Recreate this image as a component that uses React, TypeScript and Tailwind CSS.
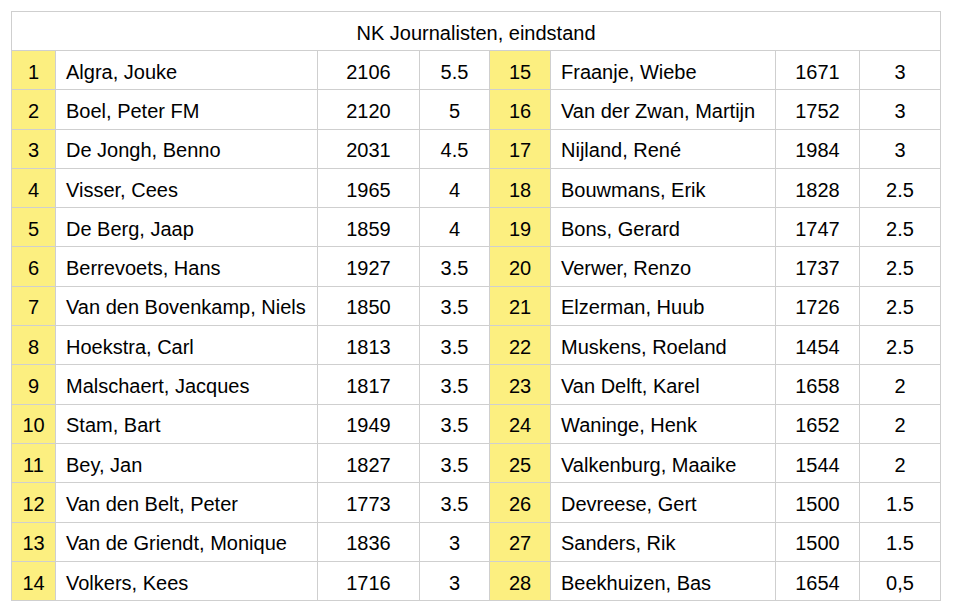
const rows: [number, string, string, string][] = [
  [1, 'Algra, Jouke', '2106', '5.5'],
  [2, 'Boel, Peter FM', '2120', '5'],
  [3, 'De Jongh, Benno', '2031', '4.5'],
  [4, 'Visser, Cees', '1965', '4'],
  [5, 'De Berg, Jaap', '1859', '4'],
  [6, 'Berrevoets, Hans', '1927', '3.5'],
  [7, 'Van den Bovenkamp, Niels', '1850', '3.5'],
  [8, 'Hoekstra, Carl', '1813', '3.5'],
  [9, 'Malschaert, Jacques', '1817', '3.5'],
  [10, 'Stam, Bart', '1949', '3.5'],
  [11, 'Bey, Jan', '1827', '3.5'],
  [12, 'Van den Belt, Peter', '1773', '3.5'],
  [13, 'Van de Griendt, Monique', '1836', '3'],
  [14, 'Volkers, Kees', '1716', '3'],
  [15, 'Fraanje, Wiebe', '1671', '3'],
  [16, 'Van der Zwan, Martijn', '1752', '3'],
  [17, 'Nijland, René', '1984', '3'],
  [18, 'Bouwmans, Erik', '1828', '2.5'],
  [19, 'Bons, Gerard', '1747', '2.5'],
  [20, 'Verwer, Renzo', '1737', '2.5'],
  [21, 'Elzerman, Huub', '1726', '2.5'],
  [22, 'Muskens, Roeland', '1454', '2.5'],
  [23, 'Van Delft, Karel', '1658', '2'],
  [24, 'Waninge, Henk', '1652', '2'],
  [25, 'Valkenburg, Maaike', '1544', '2'],
  [26, 'Devreese, Gert', '1500', '1.5'],
  [27, 'Sanders, Rik', '1500', '1.5'],
  [28, 'Beekhuizen, Bas', '1654', '0,5'],
]

const cell = 'border border-[#cfcfcf] p-0 pt-[3px] leading-[26px]'

function Half({ r }: { r: [number, string, string, string] }) {
  return (
    <>
      <td className={`${cell} bg-[#fcef80] text-center`}>{r[0]}</td>
      <td className={`${cell} pl-[10px] text-left whitespace-nowrap`}>{r[1]}</td>
      <td className={`${cell} text-center`}>{r[2]}</td>
      <td className={`${cell} text-center`}>{r[3]}</td>
    </>
  )
}

export default function App() {
  const left = rows.slice(0, 14)
  const right = rows.slice(14)

  return (
    <div className="w-[955px] h-[614px] bg-white pt-[11px] pl-[11px] font-['Liberation_Sans',Arial,sans-serif] text-[20px] text-black">
      <table className="border-collapse table-fixed w-[929px]">
        <colgroup>
          <col className="w-[44px]" />
          <col className="w-[262px]" />
          <col className="w-[102px]" />
          <col className="w-[70px]" />
          <col className="w-[61px]" />
          <col className="w-[225px]" />
          <col className="w-[84px]" />
          <col className="w-[81px]" />
        </colgroup>
        <tbody>
          <tr className="h-[39px]">
            <td colSpan={8} className={`${cell} text-center`}>
              NK Journalisten, eindstand
            </td>
          </tr>
          {left.map((r, i) => (
            <tr key={r[0]} className="h-[39.3px]">
              <Half r={r} />
              <Half r={right[i]} />
            </tr>
          ))}
        </tbody>
      </table>
    </div>
  )
}
